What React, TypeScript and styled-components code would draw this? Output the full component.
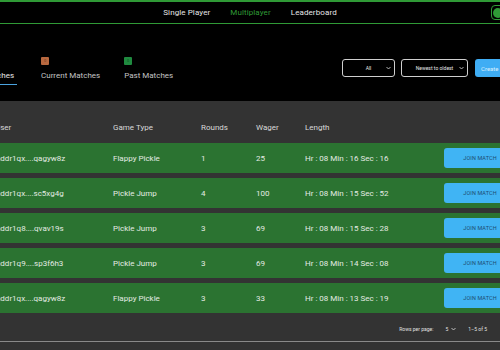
import React from "react";
import styled, { createGlobalStyle } from "styled-components";

const GlobalStyle = createGlobalStyle`
  html, body {
    margin: 0;
    padding: 0;
    background: #000;
    overflow: hidden;
  }
  body {
    font-family: "Liberation Sans Narrow", Roboto, "Liberation Sans", sans-serif;
  }
`;

const Page = styled.div`
  width: 580px;
  margin-left: -40px;
  height: 350px;
  background: #000;
  display: flex;
  flex-direction: column;
`;

const NavBar = styled.nav`
  height: 21px;
  border-top: 2px solid #2f9a36;
  border-bottom: 1px solid #2f9a36;
  display: flex;
  align-items: center;
  justify-content: center;
  position: relative;
  gap: 20px;
`;

const NavLink = styled.a<{ active?: boolean }>`
  font-size: 8px;
  color: ${({ active }) => (active ? "#2f9a36" : "#e6e6e6")};
  text-decoration: none;
  letter-spacing: 0.1px;
`;

const Toggle = styled.div`
  position: absolute;
  left: 531px;
  top: 3px;
  width: 26px;
  height: 13px;
  border: 1px solid #2f9a36;
  border-radius: 4px;
  display: flex;
  align-items: center;
  padding-left: 1px;

  &::after {
    content: "";
    width: 10px;
    height: 10px;
    border-radius: 50%;
    background: #2f9a36;
  }
`;

const Toolbar = styled.div`
  height: 77px;
  display: flex;
  align-items: flex-start;
  justify-content: space-between;
  padding: 0 10px 0 12px;
`;

const Tabs = styled.div`
  display: flex;
  gap: 24px;
  padding-top: 33px;
`;

const Tab = styled.div<{ active?: boolean }>`
  display: flex;
  flex-direction: column;
  align-items: flex-start;
  gap: 6px;
  padding: 0 0 4px;
  border-bottom: 1px solid ${({ active }) => (active ? "#4aa3df" : "transparent")};
  margin-left: ${({ active }) => (active ? "-4px" : "0")};
  padding-left: ${({ active }) => (active ? "4px" : "0")};
  padding-right: ${({ active }) => (active ? "3px" : "0")};
`;

const Badge = styled.span<{ tone: string }>`
  width: 8px;
  height: 8px;
  background: ${({ tone }) => tone};
  border-radius: 1px;
  font-size: 4px;
  line-height: 8px;
  text-align: center;
  color: rgba(0, 0, 0, 0.5);
`;

const TabLabel = styled.span<{ active?: boolean }>`
  font-size: 8px;
  line-height: 9px;
  color: ${({ active }) => (active ? "#e8e8e8" : "#c4c4c4")};
`;

const Controls = styled.div`
  display: flex;
  gap: 6px;
  padding-top: 35px;
`;

const Select = styled.div<{ w: number }>`
  width: ${({ w }) => w}px;
  height: 16px;
  border: 1px solid #cfcfcf;
  border-radius: 3px;
  display: flex;
  align-items: center;
  justify-content: center;
  position: relative;
  font-size: 5px;
  color: #e8e8e8;
  box-sizing: content-box;

  svg {
    position: absolute;
    right: 3px;
    top: 6px;
  }
`;

const CreateButton = styled.button`
  width: 55px;
  height: 18px;
  border: none;
  border-radius: 3px;
  background: #3fadf4;
  color: #d9f0ff;
  font-family: inherit;
  font-size: 6px;
  text-align: left;
  padding-left: 6px;
  margin-left: 1px;
`;

const TableArea = styled.div`
  flex: 1;
  background: #333;
  display: flex;
  flex-direction: column;
`;

const grid = `
  display: grid;
  grid-template-columns: 117px 88px 55px 49px 139px 72px;
  padding-left: 36px;
  align-items: center;
`;

const HeadRow = styled.div`
  ${grid}
  height: 42px;
  padding-top: 10px;
  box-sizing: border-box;
  font-size: 8px;
  color: #d8d8d8;

  span:first-child {
    margin-left: -1px;
  }
`;

const Rows = styled.div`
  display: flex;
  flex-direction: column;
  gap: 5px;
`;

const Row = styled.div`
  ${grid}
  height: 30px;
  background: #2b7331;
  font-size: 8px;
  color: #e3ebe3;
`;

const JoinButton = styled.button`
  height: 20px;
  width: 72px;
  border: none;
  border-radius: 3px;
  background: #40b4f4;
  color: #1f4d70;
  font-family: inherit;
  font-size: 5.5px;
  letter-spacing: 0.1px;
`;

const Pager = styled.div`
  height: 24px;
  border-bottom: 1px solid #8a8a8a;
  display: flex;
  align-items: center;
  justify-content: flex-end;
  padding-right: 53px;
  font-size: 5px;
  color: #e0e0e0;
  gap: 12px;
  margin-top: 4px;
`;

const PerPage = styled.span`
  display: flex;
  align-items: center;
  gap: 3px;
`;

const Chevron = () => (
  <svg width="5" height="4" viewBox="0 0 10 6">
    <path d="M1 1l4 4 4-4" stroke="#e0e0e0" strokeWidth="1.6" fill="none" />
  </svg>
);

const matches = [
  { user: "addr1qx....qagyw8z", game: "Flappy Pickle", rounds: 1, wager: 25, length: "Hr : 08 Min : 16 Sec : 16" },
  { user: "addr1qx....sc5xg4g", game: "Pickle Jump", rounds: 4, wager: 100, length: "Hr : 08 Min : 15 Sec : 52" },
  { user: "addr1q8....qvav19s", game: "Pickle Jump", rounds: 3, wager: 69, length: "Hr : 08 Min : 15 Sec : 28" },
  { user: "addr1q9....sp3f6h3", game: "Pickle Jump", rounds: 3, wager: 69, length: "Hr : 08 Min : 14 Sec : 08" },
  { user: "addr1qx....qagyw8z", game: "Flappy Pickle", rounds: 3, wager: 33, length: "Hr : 08 Min : 13 Sec : 19" },
];

export default function App() {
  return (
    <>
      <GlobalStyle />
      <Page>
        <NavBar>
          <NavLink>Single Player</NavLink>
          <NavLink active>Multiplayer</NavLink>
          <NavLink>Leaderboard</NavLink>
          <Toggle />
        </NavBar>
        <Toolbar>
          <Tabs>
            <Tab active>
              <Badge tone="#2f7fc0">0</Badge>
              <TabLabel active>All Matches</TabLabel>
            </Tab>
            <Tab>
              <Badge tone="#b8683f">0</Badge>
              <TabLabel>Current Matches</TabLabel>
            </Tab>
            <Tab>
              <Badge tone="#1f8a3f">0</Badge>
              <TabLabel>Past Matches</TabLabel>
            </Tab>
          </Tabs>
          <Controls>
            <Select w={51}>
              All
              <Chevron />
            </Select>
            <Select w={65}>
              Newest to oldest
              <Chevron />
            </Select>
            <CreateButton>Create Match</CreateButton>
          </Controls>
        </Toolbar>
        <TableArea>
          <HeadRow>
            <span>User</span>
            <span>Game Type</span>
            <span>Rounds</span>
            <span>Wager</span>
            <span>Length</span>
            <span />
          </HeadRow>
          <Rows>
            {matches.map((m, i) => (
              <Row key={i}>
                <span>{m.user}</span>
                <span>{m.game}</span>
                <span>{m.rounds}</span>
                <span>{m.wager}</span>
                <span>{m.length}</span>
                <JoinButton>JOIN MATCH</JoinButton>
              </Row>
            ))}
          </Rows>
          <Pager>
            <span>Rows per page:</span>
            <PerPage>
              5 <Chevron />
            </PerPage>
            <span>1–5 of 5</span>
          </Pager>
        </TableArea>
      </Page>
    </>
  );
}
